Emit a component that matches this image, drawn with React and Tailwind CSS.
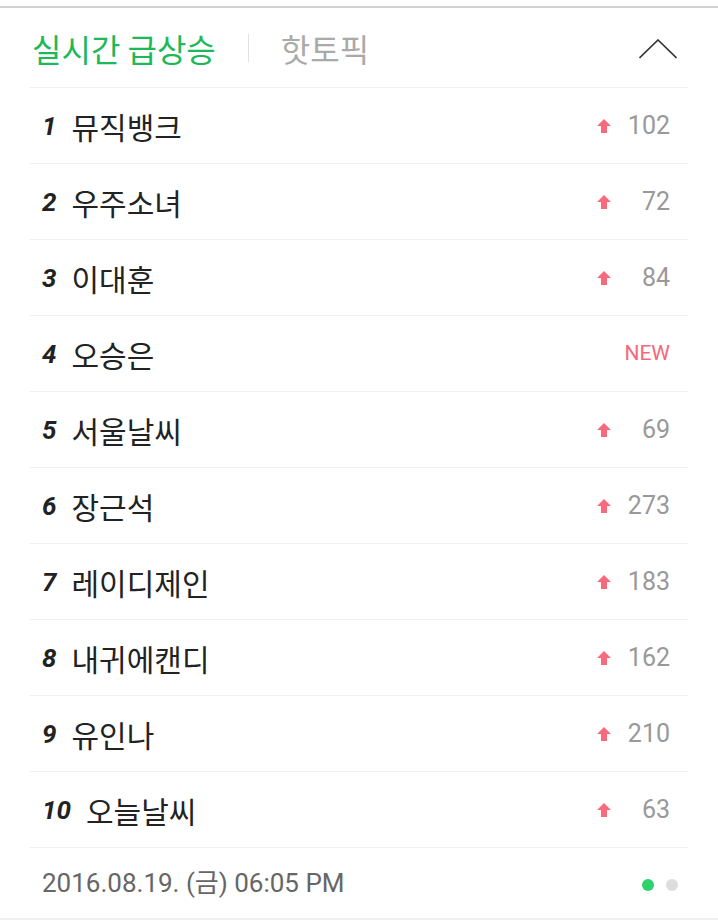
import { useState } from "react";

const KR = { fontFamily: '"Noto Sans CJK KR", "Noto Sans", sans-serif' };
const RB = { fontFamily: 'Roboto, "Noto Sans CJK KR", sans-serif' };

const items = [
  { rank: 1, word: "뮤직뱅크", diff: "102" },
  { rank: 2, word: "우주소녀", diff: "72" },
  { rank: 3, word: "이대훈", diff: "84" },
  { rank: 4, word: "오승은", diff: null },
  { rank: 5, word: "서울날씨", diff: "69" },
  { rank: 6, word: "장근석", diff: "273" },
  { rank: 7, word: "레이디제인", diff: "183" },
  { rank: 8, word: "내귀에캔디", diff: "162" },
  { rank: 9, word: "유인나", diff: "210" },
  { rank: 10, word: "오늘날씨", diff: "63" },
];

const UpArrow = () => (
  <svg width="14" height="14" viewBox="0 0 14 14">
    <path d="M7 0 L14 7 L10 7 L10 14 L4 14 L4 7 L0 7 Z" fill="#f66a7c" />
  </svg>
);

const Row = ({ item }) => (
  <li className="h-[76px] flex items-center border-b border-[#efefef] pl-[12px] pr-[18px]">
    <span style={RB} className="text-[26px] font-bold italic text-[#222] mr-[15px] leading-none">
      {item.rank}
    </span>
    <span style={KR} className="text-[30px] text-[#222] leading-none flex-1">
      {item.word}
    </span>
    {item.diff ? (
      <div className="flex items-center">
        <UpArrow />
        <span style={RB} className="w-[59px] text-right text-[25px] text-[#999] leading-none">
          {item.diff}
        </span>
      </div>
    ) : (
      <span style={RB} className="text-[21px] text-[#f5687c] leading-none">
        NEW
      </span>
    )}
  </li>
);

export default function App() {
  const [open] = useState(true);

  return (
    <div className="w-[718px] h-[921px] bg-white pt-[6px]">
      <div className="border-t-2 border-[#d2d2d2] border-b-2 border-b-[#efefef] px-[30px]">
        <div className="h-[80px] flex items-center border-b border-[#efefef] pl-[2px] pr-[11px]">
          <span style={KR} className="text-[32px] text-[#1db85a] leading-none">
            실시간 급상승
          </span>
          <span className="w-[1px] h-[28px] bg-[#e2e2e2] mx-[32px]" />
          <span style={KR} className="text-[32px] text-[#aaa] leading-none">
            핫토픽
          </span>
          <div className="flex-1" />
          <svg width="38" height="20" viewBox="0 0 38 20" className="mt-[2px]">
            <path d="M0.5 19 L19 1 L37.5 19" fill="none" stroke="#333" strokeWidth="1.6" />
          </svg>
        </div>
        {open && (
          <ul>
            {items.map((item) => (
              <Row key={item.rank} item={item} />
            ))}
          </ul>
        )}
        <div className="h-[70px] flex items-center pl-[12px] pr-[10px]">
          <span style={RB} className="text-[26px] text-[#666] flex-1 leading-none">
            2016.08.19. (금) 06:05 PM
          </span>
          <div className="flex gap-[12px] mt-[3px]">
            <span className="w-[12px] h-[12px] rounded-full bg-[#2bd26e]" />
            <span className="w-[12px] h-[12px] rounded-full bg-[#dddddd]" />
          </div>
        </div>
      </div>
    </div>
  );
}
